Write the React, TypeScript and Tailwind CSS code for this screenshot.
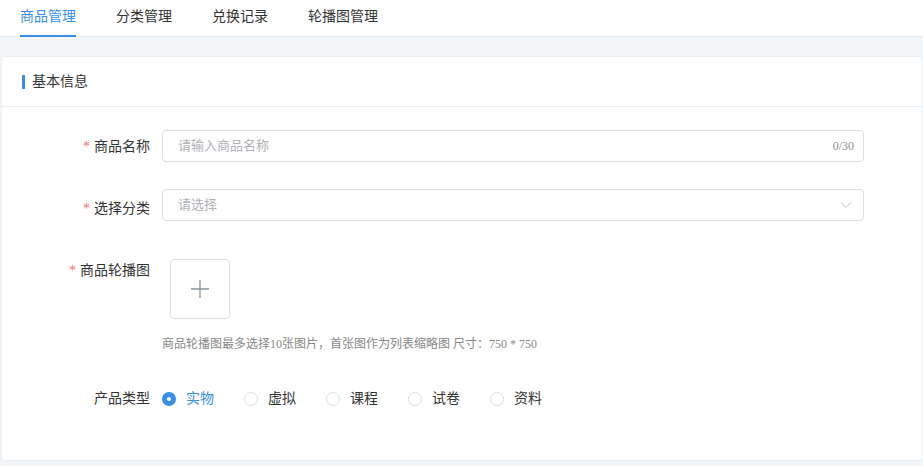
export default function App() {
  const f = { fontFamily: '"Liberation Serif","Noto Sans CJK SC",serif' };
  const radios = ["实物", "虚拟", "课程", "试卷", "资料"];
  return (
    <div style={f} className="w-[923px] h-[466px] bg-[#f3f6f9] overflow-hidden text-[14px] text-[#333]">
      <div className="h-[37px] bg-white border-b border-[#e4e7ed] flex pl-[20px] gap-[40px]">
        {["商品管理", "分类管理", "兑换记录", "轮播图管理"].map((t, i) => (
          <div key={t} className={`h-[37px] flex items-start pt-[6px] ${i === 0 ? "text-[#3a8ee6] border-b-2 border-[#3a8ee6]" : "text-[#333]"}`}>{t}</div>
        ))}
      </div>
      <div className="ml-[1px] mt-[19px] bg-white rounded-[4px] border border-[#ebeef5] h-[405px]">
        <div className="h-[50px] border-b border-[#ebeef5] flex items-center pl-[20px]">
          <span className="w-[3px] h-[14px] bg-[#3a8ee6] mr-[7px]" />
          <span>基本信息</span>
        </div>
        <div className="pt-[23px]">
          <div className="flex items-center h-[32px]">
            <div className="w-[148px] text-right pr-[0px]"><span className="text-[#f56c6c] mr-[4px]">*</span>商品名称</div>
            <div className="ml-[12px] w-[702px] h-[32px] border border-[#dcdfe6] rounded-[4px] flex items-center px-[15px] justify-between">
              <span className="text-[#b0b3b8] text-[13px]">请输入商品名称</span>
              <span className="text-[#909399] text-[12px] -mr-[6px]">0/30</span>
            </div>
          </div>
          <div className="flex items-center h-[32px] mt-[27px]">
            <div className="w-[148px] text-right pt-[6px]"><span className="text-[#f56c6c] mr-[4px]">*</span>选择分类</div>
            <div className="ml-[12px] w-[702px] h-[32px] border border-[#dcdfe6] rounded-[4px] flex items-center px-[15px] justify-between">
              <span className="text-[#b0b3b8] text-[13px]">请选择</span>
              <svg width="12" height="8" viewBox="0 0 12 8" className="-mr-[4px]"><path d="M1 1.5l5 5 5-5" fill="none" stroke="#c0c4cc" strokeWidth="1" /></svg>
            </div>
          </div>
          <div className="flex mt-[38px]">
            <div className="w-[148px] text-right pt-[1px]"><span className="text-[#f56c6c] mr-[4px]">*</span>商品轮播图</div>
            <div className="ml-[12px]">
              <div className="ml-[8px] w-[60px] h-[60px] border border-[#dcdfe6] rounded-[4px] flex items-center justify-center">
                <svg width="20" height="20" viewBox="0 0 20 20"><path d="M10 1v18M1 10h18" stroke="#8c939d" strokeWidth="1.3" /></svg>
              </div>
              <div className="mt-[16px] text-[12px] text-[#888]">商品轮播图最多选择10张图片，首张图作为列表缩略图 尺寸：750 * 750</div>
            </div>
          </div>
          <div className="flex items-center mt-[35px]">
            <div className="w-[148px] text-right">产品类型</div>
            <div className="ml-[12px] flex gap-[0px]">
              {radios.map((r, i) => (
                <div key={r} className="flex items-center w-[82px]">
                  <span className={`w-[14px] h-[14px] rounded-full flex items-center justify-center ${i === 0 ? "bg-[#3a8ee6]" : "border border-[#dcdfe6]"}`}>
                    {i === 0 && <span className="w-[4px] h-[4px] rounded-full bg-white" />}
                  </span>
                  <span className={`ml-[10px] ${i === 0 ? "text-[#3a8ee6]" : "text-[#333]"}`}>{r}</span>
                </div>
              ))}
            </div>
          </div>
        </div>
      </div>
    </div>
  );
}
